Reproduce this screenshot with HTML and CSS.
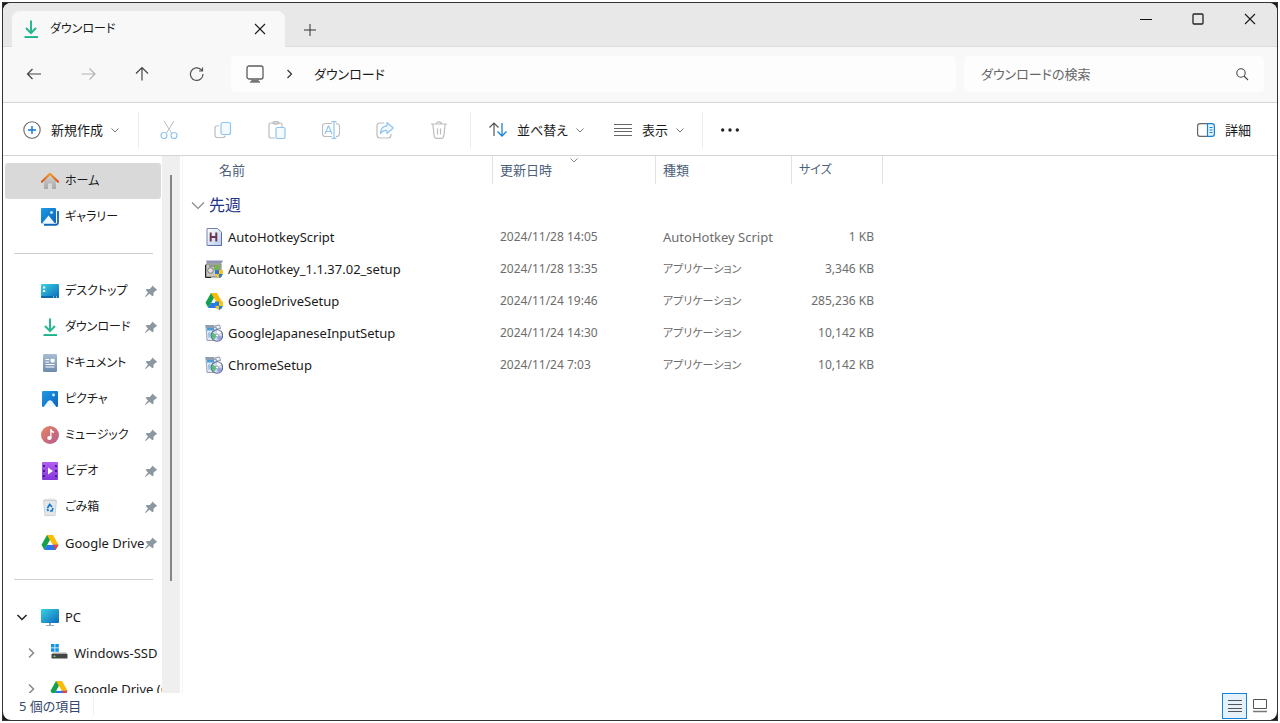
FILE: index.html
```html
<!DOCTYPE html>
<html lang="ja">
<head>
<meta charset="utf-8">
<title>ダウンロード</title>
<link rel="stylesheet" href="styles.css">
</head>
<body>
<svg class="sprite" aria-hidden="true">
  <defs>
    <linearGradient id="g-green" x1="0" y1="0" x2="0" y2="1"><stop offset="0" stop-color="#3ccb8a"/><stop offset="1" stop-color="#14a398"/></linearGradient>
    <linearGradient id="g-roof" x1="0" y1="0" x2="0" y2="1"><stop offset="0" stop-color="#f59b23"/><stop offset="1" stop-color="#d8501c"/></linearGradient>
    <linearGradient id="g-wall" x1="0" y1="0" x2="0" y2="1"><stop offset="0" stop-color="#d4d4d4"/><stop offset="1" stop-color="#a8a8a8"/></linearGradient>
    <linearGradient id="g-blue" x1="0" y1="0" x2="1" y2="1"><stop offset="0" stop-color="#1e9be6"/><stop offset="1" stop-color="#0c62bb"/></linearGradient>
    <linearGradient id="g-cyan" x1="0" y1="0" x2="1" y2="1"><stop offset="0" stop-color="#38d3e0"/><stop offset="1" stop-color="#0e68bd"/></linearGradient>
    <linearGradient id="g-doc" x1="0" y1="0" x2="0" y2="1"><stop offset="0" stop-color="#a9bcd2"/><stop offset="1" stop-color="#6d8bad"/></linearGradient>
    <linearGradient id="g-music" x1="0" y1="0" x2="1" y2="1"><stop offset="0" stop-color="#e8845a"/><stop offset="1" stop-color="#b45b94"/></linearGradient>
    <linearGradient id="g-video" x1="0" y1="0" x2="0" y2="1"><stop offset="0" stop-color="#b45cf0"/><stop offset="1" stop-color="#8338dc"/></linearGradient>
    <linearGradient id="g-page" x1="0" y1="0" x2="1" y2="1"><stop offset="0" stop-color="#ffffff"/><stop offset="1" stop-color="#b9cdec"/></linearGradient>
  </defs>
  <symbol id="i-download" viewBox="0 0 18 18"><path d="M9 .5v12M4 8l5 5 5-5" fill="none" stroke="#27b890" stroke-width="2"/><path d="M2.500 16h13.500v2H2.500z" fill="url(#g-green)"/></symbol>
  <symbol id="i-home" viewBox="0 0 18 18"><path d="M3 8l6-6 6 6v9h-4v-5.500H7V17H3z" fill="url(#g-wall)"/><path d="M.8 9.800L9 1.800l8.200 8" fill="none" stroke="url(#g-roof)" stroke-width="2" stroke-linejoin="round" stroke-linecap="round"/></symbol>
  <symbol id="i-gallery" viewBox="0 0 18 18"><path d="M3 16.800h11.500q2.500 0 2.500-2.500V3" fill="none" stroke="#1266b8" stroke-width="1.800"/><rect width="15" height="15.500" rx="1" fill="url(#g-blue)"/><path d="M1 15.500L7.500 7.500 14 15.500z" fill="#eef8ff"/><circle cx="10.500" cy="4.500" r="1.300" fill="#fff"/></symbol>
  <symbol id="i-desktop" viewBox="0 0 18 18"><rect y="2" width="18" height="14" rx="1.200" fill="url(#g-cyan)"/><path d="M2 4.500h2.200v2H2zM2 8h2.200v2H2z" fill="#fff"/><path d="M0 14h18v.8q0 1.200-1.200 1.200H1.200Q0 16 0 14.800z" fill="#0d6aa8"/><path d="M12 15h1M15 15h1" stroke="#fff"/></symbol>
  <symbol id="i-document" viewBox="0 0 18 18"><rect x="2" width="14" height="18" rx="1.200" fill="url(#g-doc)"/><path d="M4.500 5.500H8M4.500 8H8M4.500 10.500h9M4.500 13h9M10 8h3.500" stroke="#fff" stroke-width="1.200"/><path d="M9.500 4.800h4v3h-4z" fill="#fff"/></symbol>
  <symbol id="i-picture" viewBox="0 0 18 18"><rect x="1" y="1" width="16" height="16" rx="1" fill="url(#g-blue)"/><path d="M2.500 17L7 11.200q2-2 4 0l4.500 5.800z" fill="#eef8ff"/><circle cx="12.500" cy="5" r="1.400" fill="#d9f0ff"/></symbol>
  <symbol id="i-music" viewBox="0 0 18 18"><circle cx="9" cy="9" r="9" fill="url(#g-music)"/><path d="M9.200 3h1.300q.2 2 2.500 2.500v1.600q-1.500-.2-2.500-1V12H9.200z" fill="#fff"/><ellipse cx="8.400" cy="12" rx="2.200" ry="2" fill="#fff"/></symbol>
  <symbol id="i-video" viewBox="0 0 18 18"><rect x="1" width="16" height="18" rx="1" fill="url(#g-video)"/><path d="M2 3h2v2H2zM2 8h2v2H2zM2 13h2v2H2zM14 3h2v2h-2zM14 8h2v2h-2zM14 13h2v2h-2z" fill="#44208a"/><path d="M7 5.500l5 3.500-5 3.500z" fill="#fff"/></symbol>
  <symbol id="i-trash" viewBox="0 0 18 18"><path d="M2.500 2.500h13L14 17.500H4z" fill="#e3e7ea" stroke="#bcc3c8" stroke-width=".7"/><path d="M3 2.500l2-1.500 2 1 2-1.500 2 1.500 2-1 2 1.500z" fill="#f6f6f6" stroke="#bbb" stroke-width=".5"/><path d="M6.500 10l2.200-3.500L11 9M12 10l-1 3H9M7.500 13l-1.400-2" fill="none" stroke="#147bd1" stroke-width="1.700"/></symbol>
  <symbol id="i-drive" viewBox="0 0 18 18"><path d="M6 1h6l-3 5.200L3.300 16 .5 10.800z" fill="#17a04b"/><path d="M6 1h6l5.500 9.800h-6z" fill="#fbbc05"/><path d="M6.200 10.800h11.300l-3 5.200H3.300z" fill="#2878ec"/><path d="M14.500 16l3-5.200h-5.500z" fill="#ea4335"/><path d="M9 6l2.700 4.800H6.300z" fill="#fff"/></symbol>
  <symbol id="i-pc" viewBox="0 0 18 18"><rect width="18" height="14" y="1" rx="1" fill="url(#g-cyan)"/><path d="M8 15h2v2h3v1H5v-1h3z" fill="#9aaab8"/></symbol>
  <symbol id="i-ssd" viewBox="0 0 18 18"><path d="M1 0h3.500v3.500H1zM5.300 0h3.500v3.500H5.300zM1 4.300h3.500v3.500H1zM5.300 4.300h3.500v3.500H5.300z" fill="#1593e6"/><path d="M3 8.500h13l1.500 2h-16z" fill="#aaa"/><rect x="1.500" y="10" width="16" height="4.500" rx=".5" fill="#444"/><path d="M3.500 12.300h2" stroke="#5bd45b" stroke-width="1.500"/></symbol>
  <symbol id="i-pin" viewBox="0 0 14 14"><path d="M8.300 1.500l5 4.400-1.300.6-2.400 2-.1 2.900-1.100.9-2.900-2.500L1.500 13 1 12.500 4 8.500 1.700 6l1-1 3.200-.1L8 2.600z" fill="#8c98a0"/></symbol>
  <symbol id="i-chev" viewBox="0 0 10 10"><path d="M1.500 3.500L5 7l3.500-3.500" fill="none" stroke="currentColor"/></symbol>
  <symbol id="i-x" viewBox="0 0 12 12"><path d="M1 1l10 10M11 1L1 11" fill="none" stroke="currentColor" stroke-width="1.100"/></symbol>
  <symbol id="i-ahk" viewBox="0 0 18 18"><path d="M2 .5h10.500L16.500 4v13.500H2z" fill="url(#g-page)" stroke="#7486ad"/><path d="M16.500 5v12.500H3" fill="none" stroke="#5871a5"/><path d="M5.700 4.500v9M11.300 4.500v9M5.700 9h5.600" stroke="#6c3550" stroke-width="2" fill="none"/></symbol>
  <symbol id="i-setup" viewBox="0 0 18 18"><path d="M1 .5h17l-1.500 3H2z" fill="#8f95b5"/><path d="M1 4h15v13H1z" fill="#c9c9c0" stroke="#777"/><path d="M.5 5v12.500H6" fill="none" stroke="#222"/><circle cx="5.500" cy="10.500" r="2.800" fill="#e4e4e4" stroke="#777"/><path d="M9 5h6v5H9z" fill="#7bae5b"/><path d="M4 5h5v2H4z" fill="#8a9a90"/><path d="M10 10h4v4h-4z" fill="#2d7bd1"/><path d="M14 10h4v4h-4z" fill="#f7c325"/><path d="M10 14h4v4q-3-1-4-4z" fill="#f7c325"/><path d="M14 14h4q-1 3-4 4z" fill="#2d7bd1"/></symbol>
  <symbol id="i-shield" viewBox="0 0 18 18"><path d="M10 9.500h4V14h-4z" fill="#2581d5"/><path d="M14 9.500h4V14h-4zM10 14h4v4q-3-1-4-4z" fill="#f8c51b"/><path d="M14 14h4q-1 3-4 4z" fill="#2581d5"/></symbol>
  <symbol id="i-disc" viewBox="0 0 18 18"><path d="M1 3h11v13.500H2z" fill="#dfe8f1" stroke="#98a6b8"/><path d="M0 1h9l1 3H1z" fill="#8f9db0"/><path d="M2 4h7v2.500H2z" fill="#4d9bd8"/><path d="M3 8.500h4v5H3z" fill="#9cc6ea"/><path d="M10.500 1.500l4-.5 1 3.500-4 .5z" fill="#eef1f5" stroke="#8c98a8"/><circle cx="12" cy="11.500" r="5.700" fill="#cfd6ee" stroke="#5a6684" stroke-width="1.100"/><path d="M12 11.500L7.500 8.500a5.300 5.300 0 0 0 1.500 7z" fill="#55c070"/><path d="M12 11.500l4.500-3A5.300 5.300 0 0 0 12 6.200z" fill="#f3f6ff"/><path d="M12 11.500l1 5a5.300 5.300 0 0 0 4-4z" fill="#8fa3ea"/><circle cx="12" cy="11.500" r="1.500" fill="#fff" stroke="#789" stroke-width=".7"/></symbol>
</svg>

<div class="frame">
<div class="window">
  <header class="titlebar">
    <div class="tab">
      <svg class="ic18"><use href="#i-download"/></svg>
      <span class="tab-name kana">ダウンロード</span>
      <button class="bare" aria-label="タブを閉じる"><svg class="ic12"><use href="#i-x"/></svg></button>
    </div>
    <button class="bare new-tab" aria-label="新しいタブ"><svg class="ic12" viewBox="0 0 12 12"><path d="M6 0v12M0 6h12" stroke="#333" fill="none"/></svg></button>
    <div class="controls">
      <button class="bare" aria-label="最小化"><svg class="ic12" viewBox="0 0 12 12"><path d="M0 6.500h12" stroke="#111"/></svg></button>
      <button class="bare" aria-label="最大化"><svg class="ic12" viewBox="0 0 12 12"><rect x="1" y="1" width="10" height="10" rx="1" fill="none" stroke="#222" stroke-width="1.300"/></svg></button>
      <button class="bare" aria-label="閉じる"><svg class="ic12"><use href="#i-x"/></svg></button>
    </div>
  </header>

  <div class="navbar">
    <div class="nav-buttons">
      <button class="bare" aria-label="戻る"><svg class="ic16" viewBox="0 0 16 16"><path d="M6.500 3L1.500 8l5 5M1.500 8h13.500" fill="none" stroke="#444" stroke-width="1.200"/></svg></button>
      <button class="bare" aria-label="進む" disabled><svg class="ic16" viewBox="0 0 16 16"><path d="M9.500 2.500L15 8l-5.500 5.500M15 8H1.500" fill="none" stroke="#b4b4b4" stroke-width="1.200"/></svg></button>
      <button class="bare" aria-label="上へ"><svg class="ic16" viewBox="0 0 16 16"><path d="M2 7.500l6-6 6 6M8 1.500v13" fill="none" stroke="#444" stroke-width="1.200"/></svg></button>
      <button class="bare" aria-label="更新"><svg class="ic16" viewBox="0 0 16 16"><path d="M15 8A6.300 6.300 0 1 1 13 3.500L14.500 5M14.500 1.500V5H11" fill="none" stroke="#555" stroke-width="1.200"/></svg></button>
    </div>
    <nav class="address" aria-label="アドレス">
      <svg class="ic20" viewBox="0 0 20 20"><rect x="2" y="2" width="16" height="13" rx="2" fill="none" stroke="#5c5c5c" stroke-width="1.300"/><path d="M7 15v2.500M13 15v2.500M5 18h10M7 16.500h6" stroke="#777" stroke-width="1.300"/></svg>
      <svg class="ic12 crumb-sep" viewBox="0 0 12 12"><path d="M4.500 2l4 4-4 4" fill="none" stroke="#333" stroke-width="1.200"/></svg>
      <a href="#" class="crumb">ダウンロード</a>
    </nav>
    <label class="search">
      <input type="text" placeholder="ダウンロードの検索" aria-label="ダウンロードの検索">
      <svg class="ic14" viewBox="0 0 14 14"><circle cx="6" cy="6" r="4.200" fill="none" stroke="#444" stroke-width="1.100"/><path d="M9 9l4 4" stroke="#444" stroke-width="1.100"/></svg>
    </label>
  </div>

  <div class="toolbar">
    <button class="tool tool-new"><svg class="ic18" viewBox="0 0 18 18"><circle cx="9" cy="9" r="8.200" fill="none" stroke="#666" stroke-width="1.100"/><path d="M9 5v8M5 9h8" stroke="#0f78d4" stroke-width="1.400"/></svg><span>新規作成</span><svg class="ic10"><use href="#i-chev"/></svg></button>
    <div class="tool-group">
      <button class="bare" aria-label="切り取り" disabled><svg class="ic18" viewBox="0 0 18 18"><path d="M4 0l7.500 12M14 0L6.500 12" stroke="#bdbdbd" fill="none"/><circle cx="4" cy="14.500" r="3" fill="none" stroke="#8fc5ef" stroke-width="1.200"/><circle cx="14" cy="14.500" r="3" fill="none" stroke="#8fc5ef" stroke-width="1.200"/></svg></button>
      <button class="bare" aria-label="コピー" disabled><svg class="ic18" viewBox="0 0 18 18"><path d="M5 5H3Q1 5 1 7v7q0 2.500 2.500 2.500H9q2 0 2-2" fill="none" stroke="#bdbdbd" stroke-width="1.200"/><rect x="7" y="1.500" width="9.500" height="12" rx="2" fill="#f4faff" stroke="#8fc5ef" stroke-width="1.200"/></svg></button>
      <button class="bare" aria-label="貼り付け" disabled><svg class="ic18" viewBox="0 0 18 18"><path d="M7 17H3q-2 0-2-2V4q0-2 2-2h9q2 0 2 2v2M5 2.500Q5 .5 7 .5h2q2 0 2 2-3 1.500-6 0z" fill="none" stroke="#bdbdbd" stroke-width="1.200"/><rect x="8" y="6.500" width="9" height="11" rx="1.500" fill="#f4faff" stroke="#8fc5ef" stroke-width="1.200"/></svg></button>
      <button class="bare" aria-label="名前の変更" disabled><svg class="ic18" viewBox="0 0 18 18"><path d="M10 15.500H3.500Q.5 15.500.5 12.500v-7q0-3 3-3H10M14 2.500q3.500 0 3.500 3v7q0 3-3.500 3" fill="none" stroke="#bdbdbd" stroke-width="1.200"/><path d="M3 13l3.300-8h.4L10 13M4.300 10.500h4.500M9.500.7h5M12 .7v16.600M9.500 17.300h5" fill="none" stroke="#8fc5ef" stroke-width="1.200"/></svg></button>
      <button class="bare" aria-label="共有" disabled><svg class="ic18" viewBox="0 0 18 18"><path d="M8 2H4Q1 2 1 5v9q0 3 3 3h8q3 0 3-3v-1" fill="none" stroke="#bdbdbd" stroke-width="1.200"/><path d="M11 1.500L17.200 7 11 12.500V9.500Q6.500 9.200 4.500 12.500 4.500 5.500 11 4.800z" fill="#f4faff" stroke="#8fc5ef" stroke-width="1.200" stroke-linejoin="round"/></svg></button>
      <button class="bare" aria-label="削除" disabled><svg class="ic18" viewBox="0 0 18 18"><path d="M1 3h16M6.500 3Q6.500.8 9 .8T11.500 3M2.800 3l1.400 12q.3 2.300 2.300 2.300h5q2 0 2.300-2.300L15.200 3M7.500 7.500v6M10.500 7.500v6" fill="none" stroke="#bdbdbd" stroke-width="1.200"/></svg></button>
    </div>
    <div class="tool-group views">
      <button class="tool"><svg class="ic18" viewBox="0 0 18 18"><path d="M.5 6.500L5 2l4.500 4.500M5 2v13" fill="none" stroke="#555" stroke-width="1.200"/><path d="M8.500 10.500L13 15l4.500-4.500M13 15V2" fill="none" stroke="#1784dc" stroke-width="1.300"/></svg><span>並べ替え</span><svg class="ic10"><use href="#i-chev"/></svg></button>
      <button class="tool"><svg class="ic18" viewBox="0 0 18 18"><path d="M0 3.500h18M0 7.500h18M0 10.500h18M0 14.500h18" stroke="#666"/></svg><span>表示</span><svg class="ic10"><use href="#i-chev"/></svg></button>
    </div>
    <button class="bare more" aria-label="もっと見る"><svg class="ic18" viewBox="0 0 18 18"><path d="M0 9a1.700 1.700 0 1 0 3.400 0A1.700 1.700 0 1 0 0 9M7.300 9a1.700 1.700 0 1 0 3.400 0A1.700 1.700 0 1 0 7.300 9M14.600 9a1.700 1.700 0 1 0 3.400 0A1.700 1.700 0 1 0 14.600 9" fill="#222"/></svg></button>
    <button class="tool details"><svg class="ic18" viewBox="0 0 18 18"><path d="M10.500 2.600H3Q.6 2.600.6 5v8Q.6 15.400 3 15.400h7.500" fill="none" stroke="#666" stroke-width="1.200"/><path d="M10.500 2.600H15q2.400 0 2.400 2.400v8q0 2.400-2.400 2.400h-4.500zM12.500 6.500h3M12.500 9h3M12.500 11.500h3" fill="#e6f3fd" stroke="#1683d8" stroke-width="1.200"/></svg><span>詳細</span></button>
  </div>

  <div class="body">
    <aside class="side">
      <ul class="tree">
        <li><a href="#" class="selected"><svg class="ic18"><use href="#i-home"/></svg><span class="kana">ホーム</span></a></li>
        <li><a href="#"><svg class="ic18"><use href="#i-gallery"/></svg><span class="kana">ギャラリー</span></a></li>
        <li class="rule"></li>
        <li><a href="#"><svg class="ic18"><use href="#i-desktop"/></svg><span class="kana">デスクトップ</span><svg class="ic14 pin"><use href="#i-pin"/></svg></a></li>
        <li><a href="#"><svg class="ic18"><use href="#i-download"/></svg><span class="kana">ダウンロード</span><svg class="ic14 pin"><use href="#i-pin"/></svg></a></li>
        <li><a href="#"><svg class="ic18"><use href="#i-document"/></svg><span class="kana">ドキュメント</span><svg class="ic14 pin"><use href="#i-pin"/></svg></a></li>
        <li><a href="#"><svg class="ic18"><use href="#i-picture"/></svg><span class="kana">ピクチャ</span><svg class="ic14 pin"><use href="#i-pin"/></svg></a></li>
        <li><a href="#"><svg class="ic18"><use href="#i-music"/></svg><span class="kana">ミュージック</span><svg class="ic14 pin"><use href="#i-pin"/></svg></a></li>
        <li><a href="#"><svg class="ic18"><use href="#i-video"/></svg><span class="kana">ビデオ</span><svg class="ic14 pin"><use href="#i-pin"/></svg></a></li>
        <li><a href="#"><svg class="ic18"><use href="#i-trash"/></svg><span class="kana">ごみ箱</span><svg class="ic14 pin"><use href="#i-pin"/></svg></a></li>
        <li><a href="#"><svg class="ic18"><use href="#i-drive"/></svg><span>Google Drive</span><svg class="ic14 pin"><use href="#i-pin"/></svg></a></li>
        <li class="rule"></li>
        <li><a href="#" class="root"><svg class="ic12 twist" viewBox="0 0 12 12"><path d="M1.500 4L6 8.500 10.500 4" fill="none" stroke="#222" stroke-width="1.500"/></svg><svg class="ic18"><use href="#i-pc"/></svg><span>PC</span></a></li>
        <li><a href="#" class="child"><svg class="ic12 twist" viewBox="0 0 12 12"><path d="M4 1.500L8.500 6 4 10.500" fill="none" stroke="#888" stroke-width="1.500"/></svg><svg class="ic18"><use href="#i-ssd"/></svg><span>Windows-SSD</span></a></li>
        <li><a href="#" class="child"><svg class="ic12 twist" viewBox="0 0 12 12"><path d="M4 1.500L8.500 6 4 10.500" fill="none" stroke="#888" stroke-width="1.500"/></svg><svg class="ic18"><use href="#i-drive"/></svg><span>Google Drive (G:)</span></a></li>
      </ul>
      <div class="track"><div class="thumb"></div></div>
    </aside>

    <main class="files">
      <table>
        <colgroup><col class="c-name"><col class="c-date"><col class="c-type"><col class="c-size"></colgroup>
        <thead>
          <tr><th scope="col" class="name-head">名前</th><th scope="col">更新日時<svg class="ic10 sort-mark"><use href="#i-chev"/></svg></th><th scope="col">種類</th><th scope="col" class="kana">サイズ</th></tr>
        </thead>
        <tbody>
          <tr class="group"><th colspan="4" scope="rowgroup"><button class="group-toggle"><svg class="ic14" viewBox="0 0 14 14"><path d="M1 4.500l6 6 6-6" fill="none" stroke="#888" stroke-width="1.200"/></svg>先週</button></th></tr>
          <tr><td class="name"><div><svg class="ic18"><use href="#i-ahk"/></svg>AutoHotkeyScript</div></td><td>2024/11/28 14:05</td><td class="latin">AutoHotkey Script</td><td class="num">1 KB</td></tr>
          <tr><td class="name"><div><svg class="ic18"><use href="#i-setup"/></svg>AutoHotkey_1.1.37.02_setup</div></td><td>2024/11/28 13:35</td><td class="app">アプリケーション</td><td class="num">3,346 KB</td></tr>
          <tr><td class="name"><div><svg class="ic18"><use href="#i-drive"/><use href="#i-shield"/></svg>GoogleDriveSetup</div></td><td>2024/11/24 19:46</td><td class="app">アプリケーション</td><td class="num">285,236 KB</td></tr>
          <tr><td class="name"><div><svg class="ic18"><use href="#i-disc"/></svg>GoogleJapaneseInputSetup</div></td><td>2024/11/24 14:30</td><td class="app">アプリケーション</td><td class="num">10,142 KB</td></tr>
          <tr><td class="name"><div><svg class="ic18"><use href="#i-disc"/></svg>ChromeSetup</div></td><td>2024/11/24 7:03</td><td class="app">アプリケーション</td><td class="num">10,142 KB</td></tr>
        </tbody>
      </table>
    </main>
  </div>

  <footer class="status">
    <span class="count">5 個の項目</span>
    <div class="modes">
      <button class="mode active" aria-label="詳細表示"><svg class="ic16" viewBox="0 0 16 16"><path d="M1 2.500h14M1 6.500h14M1 10.500h14M1 13.500h14" stroke="#555"/></svg></button>
      <button class="mode" aria-label="大アイコン"><svg class="ic16" viewBox="0 0 16 16"><path d="M1.500 1.500h13v9h-13z" fill="#fff" stroke="#555"/><path d="M1 13.500h14" stroke="#777" stroke-width="1.500"/></svg></button>
    </div>
  </footer>
</div>
</div>
</body>
</html>
```
FILE: styles.css
```css
* { box-sizing: border-box; }

body {
  margin: 0;
  padding: 2px;
  background: #fff;
  color: #1a1a1a;
  font: 13px/18px "Noto Sans", "Noto Sans CJK JP", sans-serif;
  font-feature-settings: "palt";
}

button, input { font: inherit; font-feature-settings: inherit; color: inherit; }
a { color: inherit; text-decoration: none; }
svg { display: block; flex: none; }

.sprite { position: absolute; width: 0; height: 0; }
.ic10 { width: 10px; height: 10px; }
.ic12 { width: 12px; height: 12px; }
.ic14 { width: 14px; height: 14px; }
.ic16 { width: 16px; height: 16px; }
.ic18 { width: 18px; height: 18px; }
.ic20 { width: 20px; height: 20px; }
.kana { font-size: 12px; }

.bare {
  display: flex;
  align-items: center;
  justify-content: center;
  padding: 0;
  border: 0;
  background: none;
}

.frame { background: #1c1c1c; border: 1px solid #333; }

.window {
  display: flex;
  flex-direction: column;
  height: calc(100vh - 6px);
  border-radius: 8px;
  overflow: hidden;
  background: #fff;
}

/* Title bar */
.titlebar {
  display: flex;
  flex: none;
  height: 44px;
  padding-left: 9px;
  background: #e8e8e8;
  box-shadow: inset 0 -1px #dcdcdc;
}

.tab {
  display: flex;
  align-items: center;
  gap: 10px;
  width: 273px;
  margin-top: 8px;
  padding: 0 19px 0 10px;
  border-radius: 8px 8px 0 0;
  background: #f8f8f8;
  color: #1a1a1a;
}

.tab-name { flex: 1; }
.new-tab { width: 50px; padding-top: 10px; }
.controls { display: flex; height: 32px; margin-left: auto; padding-right: 1px; }
.controls .bare { width: 52px; }

/* Navigation */
.navbar {
  display: flex;
  flex: none;
  align-items: center;
  gap: 8px;
  height: 56px;
  padding: 0 13px 2px 0;
  background: #f8f8f8;
  border-bottom: 1px solid #d6d6d6;
}

.nav-buttons { display: flex; padding-left: 4px; }
.nav-buttons .bare { width: 54px; height: 36px; }

.address {
  display: flex;
  flex: 1;
  align-items: center;
  height: 36px;
  padding-left: 14px;
  border-radius: 5px;
  background: #fdfdfd;
}

.crumb-sep { margin: 0 19px 0 18px; }

.search {
  display: flex;
  align-items: center;
  width: 300px;
  height: 36px;
  padding: 0 15px 0 17px;
  border-radius: 5px;
  background: #fdfdfd;
}

.search input {
  flex: 1;
  min-width: 0;
  padding: 0;
  border: 0;
  outline: 0;
  background: none;
}

.search input::placeholder { color: #666; opacity: 1; }

/* Toolbar */
.toolbar {
  display: flex;
  flex: none;
  align-items: center;
  height: 53px;
  padding-top: 2px;
  border-bottom: 1px solid #d6d6d6;
}

.tool {
  display: flex;
  align-items: center;
  gap: 10px;
  padding: 0;
  border: 0;
  background: none;
}

.tool .ic10 { margin-left: -3px; color: #777; }
.tool-new { width: 135px; padding-left: 20px; }

.tool-group {
  display: flex;
  align-items: center;
  height: 36px;
  padding: 0 4px 0 3px;
  border-left: 1px solid #ececec;
}

.tool-group .bare { width: 54px; height: 36px; }
.views { gap: 29px; padding: 0 17px 0 18px; border-right: 1px solid #ececec; }
.more { width: 54px; height: 36px; }
.details { margin: 0 26px 0 auto; }

/* Body */
.body { display: flex; flex: 1; min-height: 0; }

.side {
  display: flex;
  flex: none;
  width: 180px;
  overflow: hidden;
  border-right: 1px solid #f5f5f5;
}

.tree {
  flex: none;
  width: 159px;
  margin: 0;
  padding: 7px 1px 0 2px;
  list-style: none;
  overflow: hidden;
}

.tree a {
  display: flex;
  align-items: center;
  height: 36px;
  padding: 0 3px 0 36px;
  border-radius: 3px;
  white-space: nowrap;
}

.tree span { margin-left: 6px; }
.tree .selected { background: #d9d9d9; }
.tree .root { padding-left: 11px; }
.tree .root .twist { margin-right: 13px; }
.tree .child { padding-left: 20px; padding-right: 0; }
.tree .child .twist { margin-right: 13px; }
.tree .pin { margin-left: auto; }
.rule { height: 38px; padding: 18px 8px 0 9px; }
.rule::before { content: ""; display: block; height: 1px; background: #cfcfcf; }

.track { width: 18px; padding: 19px 8px 0; background: #efefef; }
.thumb { height: 406px; background: #858585; }

/* File list */
.files { flex: 1; min-width: 0; overflow: auto; }

table { width: 700px; table-layout: fixed; border-collapse: separate; border-spacing: 0; }
.c-name { width: 310px; }
.c-date { width: 163px; }
.c-type { width: 136px; }
.c-size { width: 91px; }

thead th {
  position: relative;
  height: 28px;
  padding: 0 0 0 7px;
  border-right: 1px solid #e2e2e2;
  color: #4c607a;
  font-weight: 400;
  text-align: left;
}

thead .name-head { padding-left: 36px; }
.sort-mark { position: absolute; top: -1px; left: 76px; color: #888; }

.group th { height: 37px; padding: 4px 0 0 8px; font-weight: 400; text-align: left; }

.group-toggle {
  display: flex;
  align-items: center;
  gap: 4px;
  padding: 0;
  border: 0;
  background: none;
  color: #1e3287;
  font-size: 16px;
  line-height: 24px;
}

tbody td { height: 32px; padding: 0 0 0 7px; color: #6d6d6d; font-size: 12px; white-space: nowrap; }
tbody .name { padding-left: 22px; color: #1a1a1a; font-size: 13px; }
tbody .latin { font-size: 13px; }
tbody .app { font-size: 11px; }
.name div { display: flex; align-items: center; gap: 5px; }
tbody .num { padding: 0 9px 0 0; text-align: right; }

/* Status bar */
.status { display: flex; flex: none; height: 27px; align-items: center; padding-bottom: 1px; }
.count { padding: 0 12px 0 16px; border-right: 1px solid #f0f0f0; color: #34496b; }
.modes { display: flex; margin-left: auto; padding-right: 5px; }

.mode {
  display: flex;
  align-items: center;
  justify-content: center;
  width: 25px;
  height: 26px;
  padding: 0;
  border: 1px solid transparent;
  background: none;
}

.mode.active { border-color: #1683d8; background: #e5f1fb; }
```
